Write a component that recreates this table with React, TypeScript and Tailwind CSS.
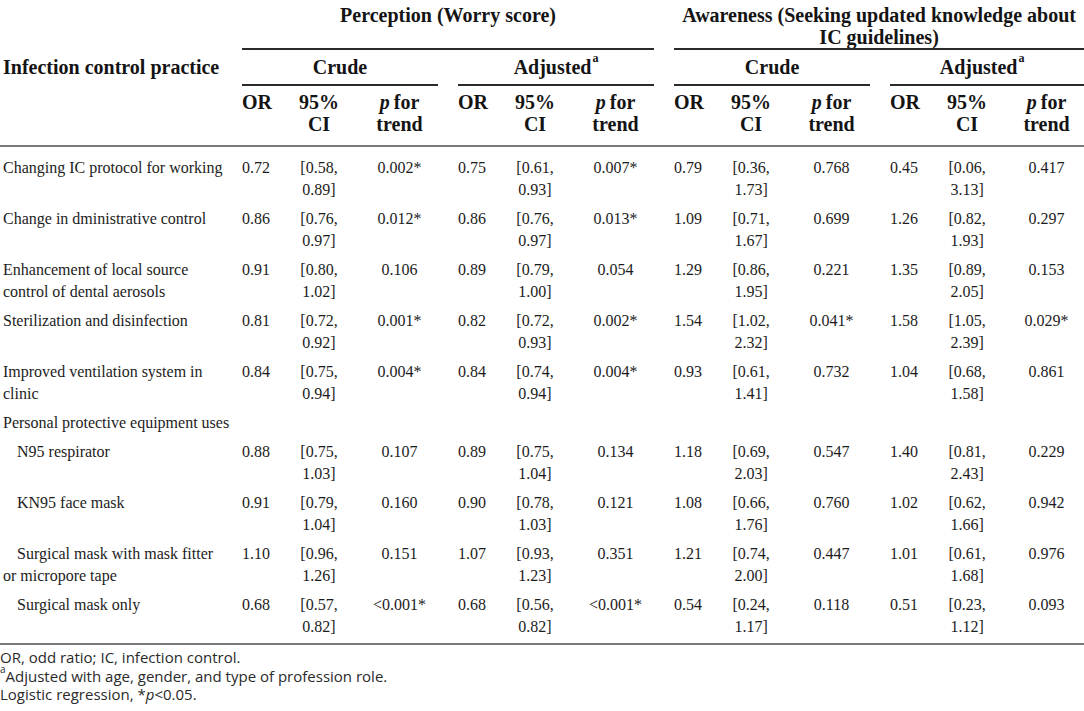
import React from "react";

type Row = { label: string; indent?: boolean; cells?: string[] };

const rows: Row[] = [
  { label: "Changing IC protocol for working", cells: ["0.72", "[0.58, 0.89]", "0.002*", "0.75", "[0.61, 0.93]", "0.007*", "0.79", "[0.36, 1.73]", "0.768", "0.45", "[0.06, 3.13]", "0.417"] },
  { label: "Change in dministrative control", cells: ["0.86", "[0.76, 0.97]", "0.012*", "0.86", "[0.76, 0.97]", "0.013*", "1.09", "[0.71, 1.67]", "0.699", "1.26", "[0.82, 1.93]", "0.297"] },
  { label: "Enhancement of local source control of dental aerosols", cells: ["0.91", "[0.80, 1.02]", "0.106", "0.89", "[0.79, 1.00]", "0.054", "1.29", "[0.86, 1.95]", "0.221", "1.35", "[0.89, 2.05]", "0.153"] },
  { label: "Sterilization and disinfection", cells: ["0.81", "[0.72, 0.92]", "0.001*", "0.82", "[0.72, 0.93]", "0.002*", "1.54", "[1.02, 2.32]", "0.041*", "1.58", "[1.05, 2.39]", "0.029*"] },
  { label: "Improved ventilation system in clinic", cells: ["0.84", "[0.75, 0.94]", "0.004*", "0.84", "[0.74, 0.94]", "0.004*", "0.93", "[0.61, 1.41]", "0.732", "1.04", "[0.68, 1.58]", "0.861"] },
  { label: "Personal protective equipment uses" },
  { label: "N95 respirator", indent: true, cells: ["0.88", "[0.75, 1.03]", "0.107", "0.89", "[0.75, 1.04]", "0.134", "1.18", "[0.69, 2.03]", "0.547", "1.40", "[0.81, 2.43]", "0.229"] },
  { label: "KN95 face mask", indent: true, cells: ["0.91", "[0.79, 1.04]", "0.160", "0.90", "[0.78, 1.03]", "0.121", "1.08", "[0.66, 1.76]", "0.760", "1.02", "[0.62, 1.66]", "0.942"] },
  { label: "Surgical mask with mask fitter or micropore tape", indent: true, cells: ["1.10", "[0.96, 1.26]", "0.151", "1.07", "[0.93, 1.23]", "0.351", "1.21", "[0.74, 2.00]", "0.447", "1.01", "[0.61, 1.68]", "0.976"] },
  { label: "Surgical mask only", indent: true, cells: ["0.68", "[0.57, 0.82]", "<0.001*", "0.68", "[0.56, 0.82]", "<0.001*", "0.54", "[0.24, 1.17]", "0.118", "0.51", "[0.23, 1.12]", "0.093"] },
];

const serif = { fontFamily: '"Liberation Serif", "Times New Roman", serif' };

function Sub({ children, last }: { children: React.ReactNode; last?: boolean }) {
  return (
    <th colSpan={3} className="p-0 align-top font-bold">
      <div className="flex h-[36px] flex-col">
        <div className="pt-[6px] text-center leading-[22px]">{children}</div>
        <div className={`mt-auto h-[2px] bg-[#2a2a2a] ml-[10px] ${last ? "mr-0" : "mr-[10px]"}`} />
      </div>
    </th>
  );
}

function Adj() {
  return (
    <>
      Adjusted<sup className="ml-[1px] text-[12px] font-bold align-[6px]">a</sup>
    </>
  );
}

function ColHead({ last }: { last?: boolean }) {
  const base = "pt-[5px] pb-[10px] pl-[10px] align-top font-bold leading-[22px] border-b-2 border-[#7a7a7a]";
  return (
    <>
      <th className={`${base} pr-[10px] text-left`}>OR</th>
      <th className={`${base} pr-[10px] text-center`}>95% CI</th>
      <th className={`${base} ${last ? "pr-0" : "pr-[10px]"} text-center`}>
        <i className="mr-[4px]">p</i>for trend
      </th>
    </>
  );
}

export default function App() {
  return (
    <div className="w-[1084px] bg-white text-[#1c1c1c]" style={serif}>
      <table className="w-[1084px] table-fixed border-collapse">
        <colgroup>
          <col className="w-[232px]" />
          <col className="w-[55px]" />
          <col className="w-[64px]" />
          <col className="w-[97px]" />
          <col className="w-[55px]" />
          <col className="w-[64px]" />
          <col className="w-[97px]" />
          <col className="w-[55px]" />
          <col className="w-[64px]" />
          <col className="w-[97px]" />
          <col className="w-[55px]" />
          <col className="w-[64px]" />
          <col className="w-[85px]" />
        </colgroup>
        <thead className="text-[20px] text-[#141414]">
          <tr>
            <th
              rowSpan={3}
              className="pl-[3px] pr-0 pb-[12px] text-left align-middle font-bold leading-[22px] whitespace-nowrap border-b-2 border-[#7a7a7a]"
            >
              Infection control practice
            </th>
            <th colSpan={6} className="p-0 align-top font-bold">
              <div className="flex h-[50px] flex-col">
                <div className="pt-[4px] text-center leading-[22px]">Perception (Worry score)</div>
                <div className="mt-auto mx-[10px] h-[2px] bg-[#2a2a2a]" />
              </div>
            </th>
            <th colSpan={6} className="p-0 align-top font-bold">
              <div className="flex h-[50px] flex-col">
                <div className="pt-[4px] pl-[10px] text-center leading-[22px]">
                  Awareness (Seeking updated knowledge about
                  <br />
                  IC guidelines)
                </div>
                <div className="mt-auto ml-[10px] h-[2px] bg-[#2a2a2a]" />
              </div>
            </th>
          </tr>
          <tr>
            <Sub>Crude</Sub>
            <Sub>
              <Adj />
            </Sub>
            <Sub>Crude</Sub>
            <Sub last>
              <Adj />
            </Sub>
          </tr>
          <tr>
            <ColHead />
            <ColHead />
            <ColHead />
            <ColHead last />
          </tr>
        </thead>
        <tbody className="text-[16px] leading-[22px]">
          {rows.map((r, i) => {
            const first = i === 0;
            const lastRow = i === rows.length - 1;
            const pad = `${first ? "pt-[10px]" : "pt-[3px]"} ${lastRow ? "pb-[5px] border-b-2 border-[#7a7a7a]" : "pb-[4px]"} align-top`;
            if (!r.cells) {
              return (
                <tr key={i}>
                  <td colSpan={13} className={`${pad} pl-[3px] text-left`}>
                    {r.label}
                  </td>
                </tr>
              );
            }
            return (
              <tr key={i}>
                <td className={`${pad} pl-[3px] pr-[5px] text-left ${r.indent ? "indent-[14px]" : ""}`}>{r.label}</td>
                {r.cells.map((c, j) => {
                  const k = j % 3;
                  const isLast = j === 11;
                  const align = k === 0 ? "text-left" : "text-center";
                  return (
                    <td key={j} className={`${pad} pl-[10px] ${isLast ? "pr-0" : "pr-[10px]"} ${align}`}>
                      {c}
                    </td>
                  );
                })}
              </tr>
            );
          })}
        </tbody>
      </table>
      <div
        className="pt-[3px] text-[15px] leading-[18.5px] text-[#2a2a2a]"
        style={{ fontFamily: '"Open Sans", "Liberation Sans", Arial, sans-serif' }}
      >
        <div>OR, odd ratio; IC, infection control.</div>
        <div>
          <sup className="text-[10px] align-[4px]">a</sup>Adjusted with age, gender, and type of profession role.
        </div>
        <div>
          Logistic regression, *<i>p</i>&lt;0.05.
        </div>
      </div>
    </div>
  );
}
